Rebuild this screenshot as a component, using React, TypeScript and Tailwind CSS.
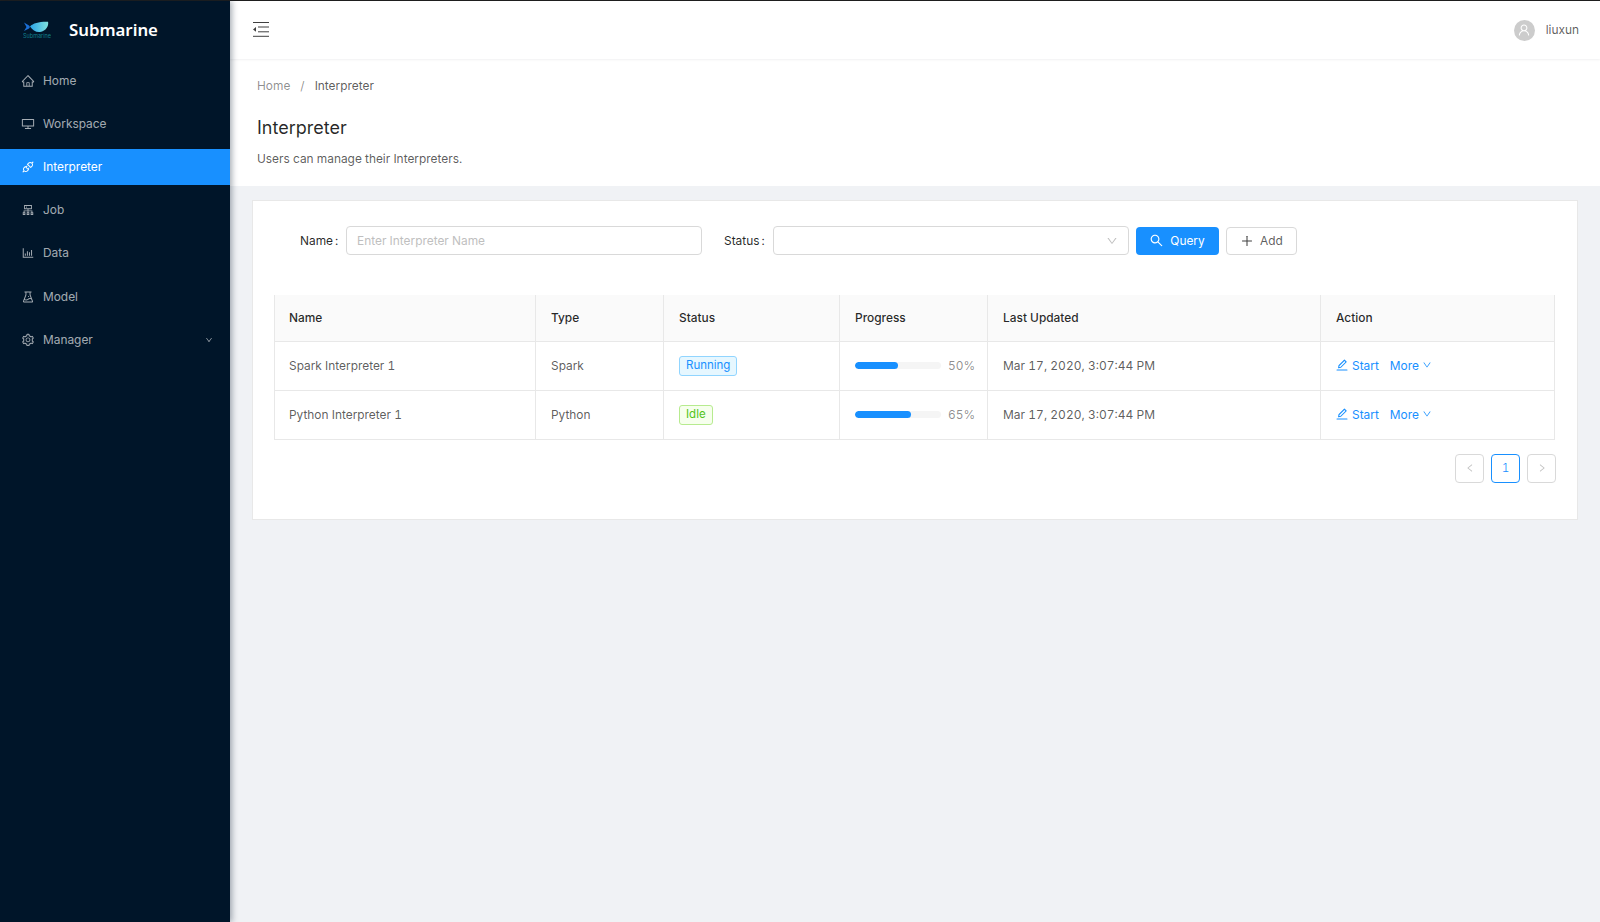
import React from "react";
import {
  AiOutlineHome, AiOutlineDesktop, AiOutlineApi, AiOutlineCluster, AiOutlineBarChart, AiOutlineExperiment,
  AiOutlineSetting, AiOutlineDown, AiOutlineSearch, AiOutlinePlus, AiOutlineEdit,
  AiOutlineLeft, AiOutlineRight, AiOutlineUser,
} from "react-icons/ai";

const nav = [
  { label: "Home", Icon: AiOutlineHome },
  { label: "Workspace", Icon: AiOutlineDesktop },
  { label: "Interpreter", Icon: AiOutlineApi, active: true },
  { label: "Job", Icon: AiOutlineCluster },
  { label: "Data", Icon: AiOutlineBarChart },
  { label: "Model", Icon: AiOutlineExperiment },
  { label: "Manager", Icon: AiOutlineSetting, arrow: true },
];

const rows = [
  { name: "Spark Interpreter 1", type: "Spark", status: "Running", pct: 50 },
  { name: "Python Interpreter 1", type: "Python", status: "Idle", pct: 65 },
];

function Logo() {
  return (
    <svg width="28" height="18" viewBox="0 0 28 18" className="shrink-0">
      <defs>
        <linearGradient id="fish" x1="0" y1="0" x2="1" y2="0">
          <stop offset="0" stopColor="#2aa5e8" />
          <stop offset="1" stopColor="#7fe0dc" />
        </linearGradient>
      </defs>
      <path d="M7 5.5 C10 2 17 .5 25 .8 C26 5 23 10 17 11 C13 11.5 9.5 9 7 5.5 Z" fill="url(#fish)" />
      <path d="M1 1.5 L6 4.5 L7 6 L6 7.5 L1 10 L3.5 6 Z" fill="#1b6fd6" />
      <text x="14" y="17" textAnchor="middle" fontSize="5.5" fill="#12808c" fontFamily="Inter, sans-serif">Submarine</text>
    </svg>
  );
}

export default function App() {
  return (
    <div className="flex flex-col h-[922px] w-[1600px] overflow-hidden bg-[#f0f2f5] font-['Inter',sans-serif] text-[11.9px] tabular-nums text-[#000000a6]">
      <div className="h-px bg-[#1f1f1f] shrink-0" />
      <div className="flex flex-1 min-h-0">
        <aside className="w-[230px] shrink-0 bg-[#001529] shadow-[2px_0_6px_rgba(0,21,41,0.35)] z-10 flex flex-col">
          <div className="h-[58px] flex items-center pl-[23px] gap-[18px]">
            <Logo />
            <span className="text-[16.8px] font-semibold text-white font-['Noto_Sans',sans-serif]">Submarine</span>
          </div>
          <nav className="flex flex-col gap-[7.2px] pt-[3.6px]">
            {nav.map(({ label, Icon, active, arrow }) => (
              <div
                key={label}
                className={`h-[36px] flex items-center pl-[21px] pr-[17px] gap-[8px] ${active ? "bg-[#1890ff] text-white" : "text-[#ffffffa6]"}`}
              >
                <Icon size={14} />
                <span className="flex-1">{label}</span>
                {arrow && <AiOutlineDown size={8} />}
              </div>
            ))}
          </nav>
        </aside>
        <main className="flex-1 min-w-0 flex flex-col">
          <header className="h-[58px] shrink-0 bg-white shadow-[0_1px_2px_rgba(0,21,41,0.06)] flex items-center justify-between pl-[23px] pr-[21px] z-[1]">
            <svg width="16" height="15" viewBox="0 0 16 15" fill="none" className="mb-[2px]">
              <path d="M0 .5H16M5 5H16M5 9.8H16M0 14.3H16" stroke="#404040" strokeWidth="1" />
              <path d="M0 7.4 L3 5 V9.8 Z" fill="#404040" />
            </svg>
            <div className="flex items-center gap-[11px]">
              <span className="w-[21px] h-[21px] rounded-full bg-[#ccc] text-white flex items-center justify-center">
                <AiOutlineUser size={14} />
              </span>
              <span>liuxun</span>
            </div>
          </header>
          <section className="h-[127px] shrink-0 bg-white pl-[27px] pt-[18px]">
            <div className="flex items-center gap-[10px] h-[18px]">
              <span className="text-[#00000073]">Home</span>
              <span className="text-[#00000073]">/</span>
              <span>Interpreter</span>
            </div>
            <h1 className="text-[18px] leading-[26px] font-normal text-[#000000d9] mt-[20px]">Interpreter</h1>
            <p className="mt-[9px] leading-[18px]">Users can manage their Interpreters.</p>
          </section>
          <div className="pl-[22px] pr-[22px] pt-[14px]">
            <div className="h-[320px] bg-white border border-[#e8e8e8] pt-[25px] px-[21px]">
              <div className="flex items-center h-[29px] pl-[26px]">
                <label className="text-[#000000d9] w-[46px]">Name<span className="ml-[2px]">:</span></label>
                <div className="w-[356px] h-[29px] rounded-[4px] border border-[#d9d9d9] flex items-center px-[10px] text-[#bfbfbf]">Enter Interpreter Name</div>
                <label className="text-[#000000d9] ml-[22px] w-[49px]">Status<span className="ml-[2px]">:</span></label>
                <div className="w-[356px] h-[29px] rounded-[4px] border border-[#d9d9d9] flex items-center justify-end pr-[10px] text-[#bfbfbf]">
                  <AiOutlineDown size={12} />
                </div>
                <button className="ml-[7px] w-[83px] h-[28px] rounded-[4px] bg-[#1890ff] text-white flex items-center justify-center gap-[6px] pr-[1px]">
                  <AiOutlineSearch size={15} />
                  Query
                </button>
                <button className="ml-[7px] w-[71px] h-[28px] rounded-[4px] border border-[#d9d9d9] flex items-center justify-center gap-[6px] bg-white">
                  <AiOutlinePlus size={14} className="text-[#404040]" />
                  Add
                </button>
              </div>
              <table className="mt-[40px] w-[1280px] table-fixed border-collapse">
                <colgroup>
                  <col className="w-[261px]" />
                  <col className="w-[128px]" />
                  <col className="w-[176px]" />
                  <col className="w-[148px]" />
                  <col className="w-[333px]" />
                  <col className="w-[234px]" />
                </colgroup>
                <thead>
                  <tr className="h-[46px] bg-[#fafafa] text-[#000000d9]">
                    {["Name", "Type", "Status", "Progress", "Last Updated", "Action"].map((h, i) => (
                      <th key={h} className={`font-medium text-left border border-[#e8e8e8] border-t-0 ${i === 0 ? "px-[14px]" : "px-[15px]"}`}>{h}</th>
                    ))}
                  </tr>
                </thead>
                <tbody>
                  {rows.map((r) => (
                    <tr key={r.name} className="h-[49px]">
                      <td className="px-[14px] border border-[#e8e8e8]">{r.name}</td>
                      <td className="px-[15px] border border-[#e8e8e8]">{r.type}</td>
                      <td className="px-[15px] border border-[#e8e8e8]">
                        {r.status === "Running" ? (
                          <span className="inline-flex items-center h-[20px] px-[6px] pt-[1px] rounded-[3px] text-[11.5px] border border-[#91d5ff] bg-[#e6f7ff] text-[#1890ff]">Running</span>
                        ) : (
                          <span className="inline-flex items-center h-[20px] px-[6px] pt-[1px] rounded-[3px] text-[11.5px] border border-[#b7eb8f] bg-[#f6ffed] text-[#52c41a]">Idle</span>
                        )}
                      </td>
                      <td className="pl-[15px] pr-[12px] border border-[#e8e8e8]">
                        <div className="flex items-center">
                          <div className="w-[86px] shrink-0 h-[7px] rounded-full bg-[#f5f5f5] overflow-hidden">
                            <div className="h-full rounded-full bg-[#1890ff]" style={{ width: `${r.pct}%` }} />
                          </div>
                          <span className="ml-[7px] text-[#00000073]">{r.pct}%</span>
                        </div>
                      </td>
                      <td className="px-[15px] text-[12px] border border-[#e8e8e8]">Mar 17, 2020, 3:07:44 PM</td>
                      <td className="pl-[14px] pr-[15px] border border-[#e8e8e8] text-[#1890ff]">
                        <div className="flex items-center">
                          <AiOutlineEdit size={14} />
                          <span className="ml-[3px]">Start</span>
                          <span className="ml-[11px]">More</span>
                          <AiOutlineDown size={10} className="ml-[3px]" />
                        </div>
                      </td>
                    </tr>
                  ))}
                </tbody>
              </table>
              <div className="flex justify-end gap-[7px] mt-[14px] w-[1282px]">
                <div className="w-[29px] h-[29px] rounded-[4px] border border-[#d9d9d9] flex items-center justify-center text-[#bfbfbf]"><AiOutlineLeft size={10} /></div>
                <div className="w-[29px] h-[29px] rounded-[4px] border border-[#1890ff] flex items-center justify-center text-[#1890ff] font-light">1</div>
                <div className="w-[29px] h-[29px] rounded-[4px] border border-[#d9d9d9] flex items-center justify-center text-[#bfbfbf]"><AiOutlineRight size={10} /></div>
              </div>
            </div>
          </div>
        </main>
      </div>
    </div>
  );
}
